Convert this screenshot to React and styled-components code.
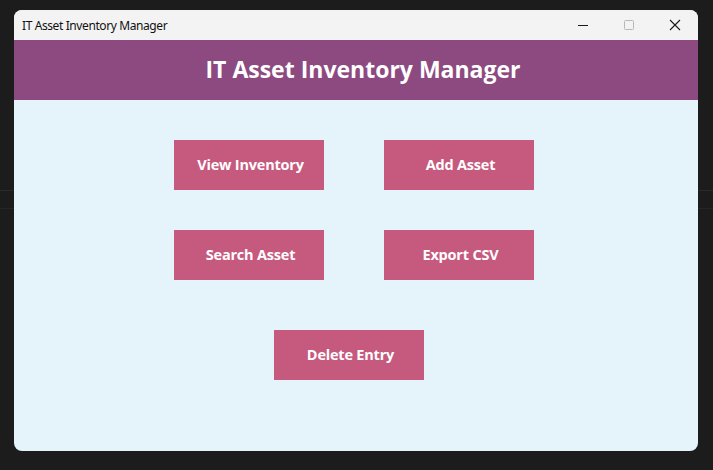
import React from "react";
import styled, { createGlobalStyle } from "styled-components";

const GlobalStyle = createGlobalStyle`
  html, body {
    margin: 0;
    padding: 0;
    background: #1c1c1c;
    font-family: "Open Sans", "Liberation Sans", sans-serif;
  }
`;

const actions = [
  ["View Inventory", "Add Asset"],
  ["Search Asset", "Export CSV"],
];

const App = () => {
  return (
    <>
      <GlobalStyle />
      <Desktop>
        <Window>
          <TitleBar>
            <span className="caption">IT Asset Inventory Manager</span>
            <Controls>
              <ControlBtn>
                <svg width="12" height="12" viewBox="0 0 12 12">
                  <path d="M1 6.5h10" stroke="#1a1a1a" strokeWidth="1" />
                </svg>
              </ControlBtn>
              <ControlBtn>
                <svg width="12" height="12" viewBox="0 0 12 12">
                  <rect x="1.5" y="1.5" width="9" height="9" rx="1" fill="none" stroke="#b8b8b8" strokeWidth="1" />
                </svg>
              </ControlBtn>
              <ControlBtn>
                <svg width="12" height="12" viewBox="0 0 12 12">
                  <path d="M1 1l10 10M11 1L1 11" stroke="#1a1a1a" strokeWidth="1.1" />
                </svg>
              </ControlBtn>
            </Controls>
          </TitleBar>
          <Header>IT Asset Inventory Manager</Header>
          <Body>
            <ButtonGrid>
              {actions.flat().map((label) => (
                <ActionButton key={label}>{label}</ActionButton>
              ))}
            </ButtonGrid>
            <SingleRow>
              <ActionButton>Delete Entry</ActionButton>
            </SingleRow>
          </Body>
        </Window>
      </Desktop>
    </>
  );
};

const Desktop = styled.div`
  width: 713px;
  height: 470px;
  padding: 10px 0 0 14px;
  box-sizing: border-box;
  background:
    linear-gradient(#2a2a2a, #2a2a2a) 0 190px / 100% 1px no-repeat,
    linear-gradient(#262626, #262626) 0 208px / 100% 1px no-repeat,
    #1c1c1c;
`;

const Window = styled.div`
  width: 684px;
  height: 441px;
  border-radius: 8px;
  overflow: hidden;
  display: flex;
  flex-direction: column;
  background: #e4f4fa;
`;

const TitleBar = styled.div`
  height: 30px;
  flex: none;
  background: #f3f3f3;
  display: flex;
  align-items: center;
  justify-content: space-between;
  padding-left: 8px;
  .caption {
    font-size: 12px;
    color: #111;
    font-family: "Noto Sans", "Open Sans", sans-serif;
    letter-spacing: -0.4px;
  }
`;

const Controls = styled.div`
  display: flex;
  height: 100%;
`;

const ControlBtn = styled.div`
  width: 46px;
  height: 100%;
  display: flex;
  align-items: center;
  justify-content: center;
`;

const Header = styled.div`
  height: 60px;
  flex: none;
  background: #8c4a80;
  color: #fff;
  font-size: 23px;
  font-weight: 700;
  display: flex;
  align-items: center;
  justify-content: center;
  padding-left: 14px;
  padding-bottom: 2px;
  box-sizing: border-box;
`;

const Body = styled.div`
  flex: 1;
  padding: 40px 0 0 160px;
`;

const ButtonGrid = styled.div`
  display: grid;
  grid-template-columns: 150px 150px;
  column-gap: 60px;
  row-gap: 40px;
`;

const SingleRow = styled.div`
  margin-top: 50px;
  padding-left: 100px;
`;

const ActionButton = styled.div`
  width: 150px;
  height: 50px;
  box-sizing: border-box;
  padding: 0 0 2px 3px;
  background: #c65a7e;
  color: #fff;
  font-size: 14.5px;
  font-weight: 700;
  display: flex;
  align-items: center;
  justify-content: center;
  letter-spacing: -0.2px;
`;

export default App;
